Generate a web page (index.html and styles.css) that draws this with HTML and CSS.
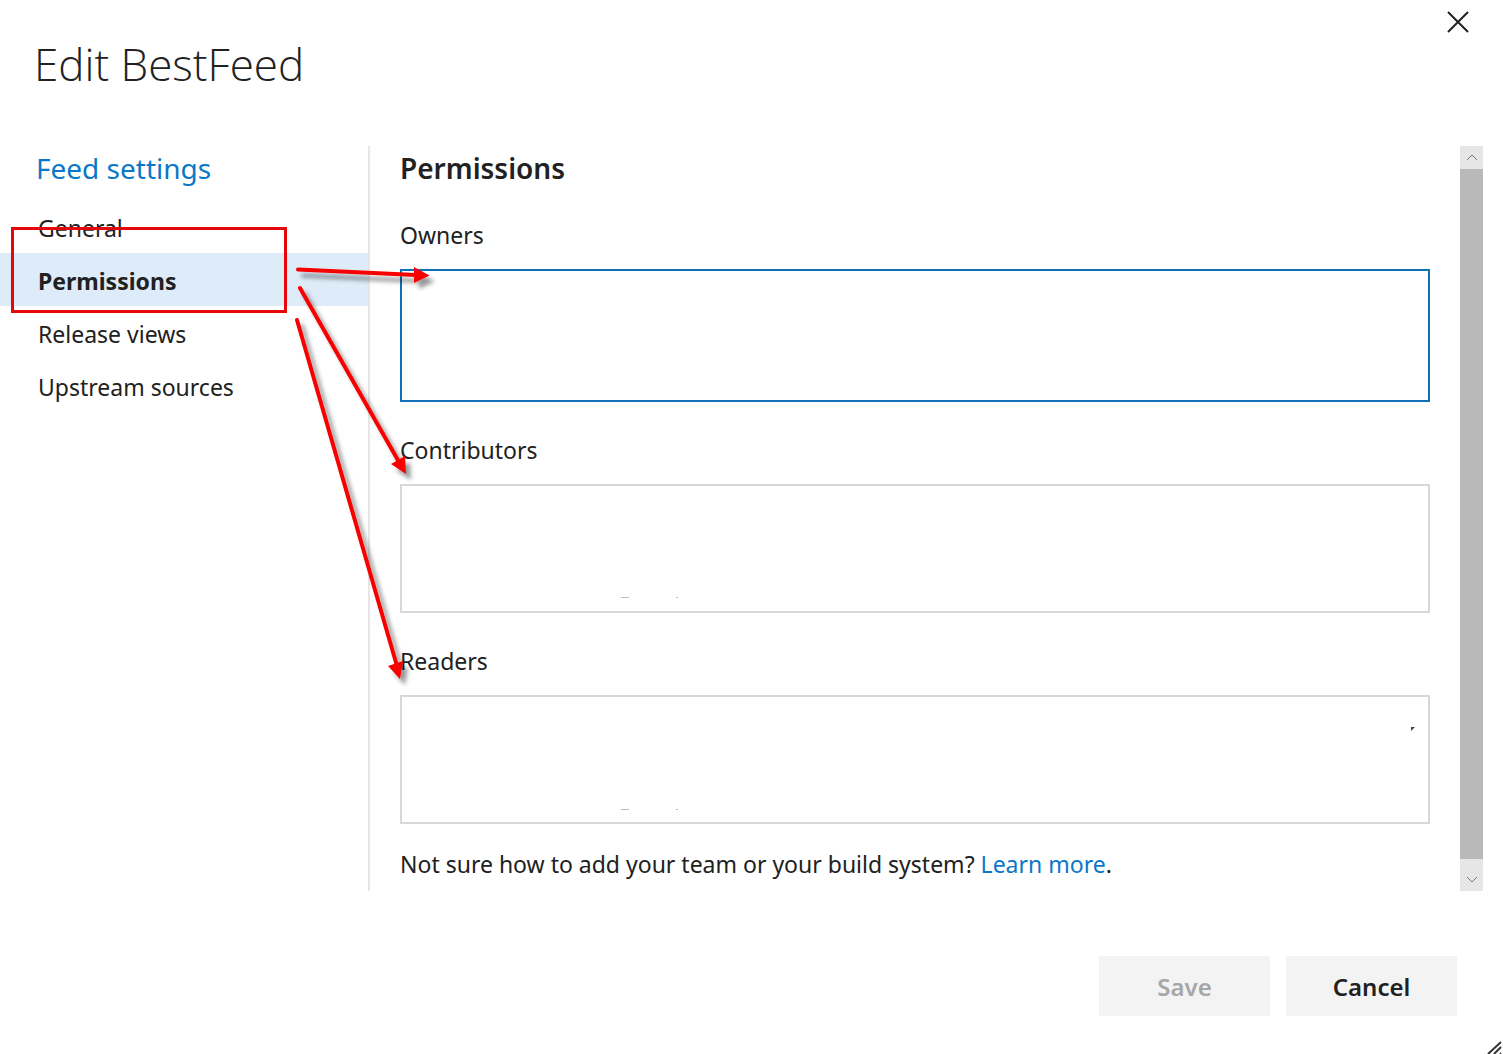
FILE: index.html
```html
<!DOCTYPE html>
<html lang="en">
<head>
<meta charset="utf-8">
<title>Edit BestFeed</title>
<link rel="stylesheet" href="styles.css">
</head>
<body>
<div class="dialog">
  <header class="dialog-header">
    <h1 class="dialog-title">Edit BestFeed</h1>
    <button class="close" type="button" aria-label="Close">
      <svg width="22" height="22" viewBox="0 0 22 22"><path d="M1 1L21 21M21 1L1 21"/></svg>
    </button>
  </header>
  <div class="dialog-body">
    <nav class="sidebar">
      <h2 class="sidebar-title">Feed settings</h2>
      <a class="nav-item" href="#general">General</a>
      <a class="nav-item selected" href="#permissions">Permissions</a>
      <a class="nav-item" href="#views">Release views</a>
      <a class="nav-item" href="#upstream">Upstream sources</a>
    </nav>
    <main class="content">
      <h2 class="content-title">Permissions</h2>
      <label class="field-label" for="owners">Owners</label>
      <textarea class="field focused" id="owners"></textarea>
      <label class="field-label" for="contributors">Contributors</label>
      <textarea class="field" id="contributors"></textarea>
      <label class="field-label" for="readers">Readers</label>
      <textarea class="field" id="readers"></textarea>
      <p class="hint">Not sure how to add your team or your build system? <a href="#learn">Learn more</a>.</p>
    </main>
    <div class="scrollbar">
      <button class="scroll-up" type="button" aria-label="Scroll up"><svg width="12" height="7" viewBox="0 0 12 7"><path d="M1 6L6 1L11 6"/></svg></button>
      <div class="thumb"></div>
      <button class="scroll-down" type="button" aria-label="Scroll down"><svg width="12" height="7" viewBox="0 0 12 7"><path d="M1 1L6 6L11 1"/></svg></button>
    </div>
  </div>
  <footer class="dialog-footer">
    <button class="button" type="button" disabled>Save</button>
    <button class="button" type="button">Cancel</button>
  </footer>
  <svg class="grip" width="16" height="13" viewBox="0 0 16 13"><path d="M1 13L14 1M7 13L14 6M13 13L14 12"/></svg>
  <svg class="annotations" width="1503" height="1054" viewBox="0 0 1503 1054">
    <defs>
      <filter id="shadow" filterUnits="userSpaceOnUse" x="280" y="250" width="180" height="460">
        <feDropShadow dx="5" dy="6" stdDeviation="2" flood-color="#000" flood-opacity="0.4"/>
      </filter>
    </defs>
    <rect class="frame" x="12.5" y="228.5" width="273" height="83"/>
    <g class="arrows" filter="url(#shadow)">
      <path d="M298 269.5L416 275M300 288L399 462M297 320L397 666"/>
      <path class="head" d="M414 267L429.5 275.5L414 283ZM391 464L405 456L406 474ZM388 666L403 661L400 679Z"/>
    </g>
    <g class="marks">
      <path d="M621 597.5h8M676 597.5h2M621 809.5h8M676 809.5h2"/>
      <path class="dark" d="M1411 727h4l-4 4z"/>
    </g>
  </svg>
</div>
</body>
</html>
```
FILE: styles.css
```css
* { box-sizing: border-box; }
body {
  margin: 0;
  background: #fff;
  color: #212121;
  font-family: "Segoe UI", "Noto Sans", sans-serif;
  font-size: 23px;
  line-height: 36px;
}
h1, h2, p { margin: 0; }
a { color: #0b77c8; text-decoration: none; }
button { border: 0; padding: 0; font: inherit; color: inherit; }
svg { display: block; fill: none; }

.dialog { position: relative; min-height: 100vh; overflow: hidden; }
.dialog-header {
  display: flex;
  justify-content: space-between;
  align-items: flex-start;
  height: 146px;
  padding: 11px 34px 0 34px;
}
.dialog-title {
  padding-top: 21px;
  font-family: "Segoe UI", "Open Sans", sans-serif;
  font-size: 44px;
  font-weight: 300;
  line-height: 64px;
}
.close { background: none; }
.close svg { stroke: #212121; stroke-width: 2; }

.dialog-body { display: flex; min-height: 745px; padding-right: 20px; }
.sidebar {
  display: flex;
  flex-direction: column;
  flex: 0 0 370px;
  border-right: 2px solid #e6e6e6;
}
.sidebar-title {
  margin-bottom: 10px;
  padding-left: 36px;
  color: #0b77c8;
  font-size: 28px;
  font-weight: 400;
  line-height: 44px;
}
.nav-item { padding: 4px 0 0 38px; color: #212121; line-height: 49px; }
.nav-item.selected { background: #deebf8; font-weight: 700; }

.content { display: flex; flex-direction: column; flex: 1; padding: 0 30px; }
.content-title { font-size: 28px; font-weight: 600; line-height: 44px; margin-bottom: 27px; }
.field-label { margin-bottom: 16px; }
.field {
  display: block;
  width: 100%;
  height: 129px;
  margin: 0 0 30px;
  border: 2px solid #d8d8d8;
  resize: none;
  outline: 0;
  font: inherit;
}
.field.focused { height: 133px; border-color: #1070b8; }
.hint { margin-top: -8px; }

.scrollbar { display: flex; flex-direction: column; width: 23px; }
.scrollbar button { display: flex; justify-content: center; align-items: center; background: #e6e6e6; }
.scrollbar svg { stroke: #777; }
.scrollbar .scroll-up { height: 23px; }
.scrollbar .scroll-down { height: 32px; padding-top: 8px; }
.thumb { flex: 1; background: #b9b9b9; }

.dialog-footer { display: flex; justify-content: flex-end; gap: 16px; padding: 65px 46px 38px; }
.button { width: 171px; height: 60px; padding-top: 2px; background: #f3f3f3; font-size: 24px; font-weight: 600; }
.button:disabled { color: #a6a6a6; }

.grip { position: absolute; right: 0; bottom: 0; stroke: #333; stroke-width: 2; }
.annotations { position: absolute; left: 0; top: 0; pointer-events: none; }
.frame { stroke: #e60808; stroke-width: 3; }
.arrows { stroke: #f80404; stroke-width: 4; stroke-linecap: round; }
.arrows .head { fill: #f80404; stroke: none; }
.marks { stroke: #bbb; }
.marks .dark { fill: #444; stroke: none; }
```
